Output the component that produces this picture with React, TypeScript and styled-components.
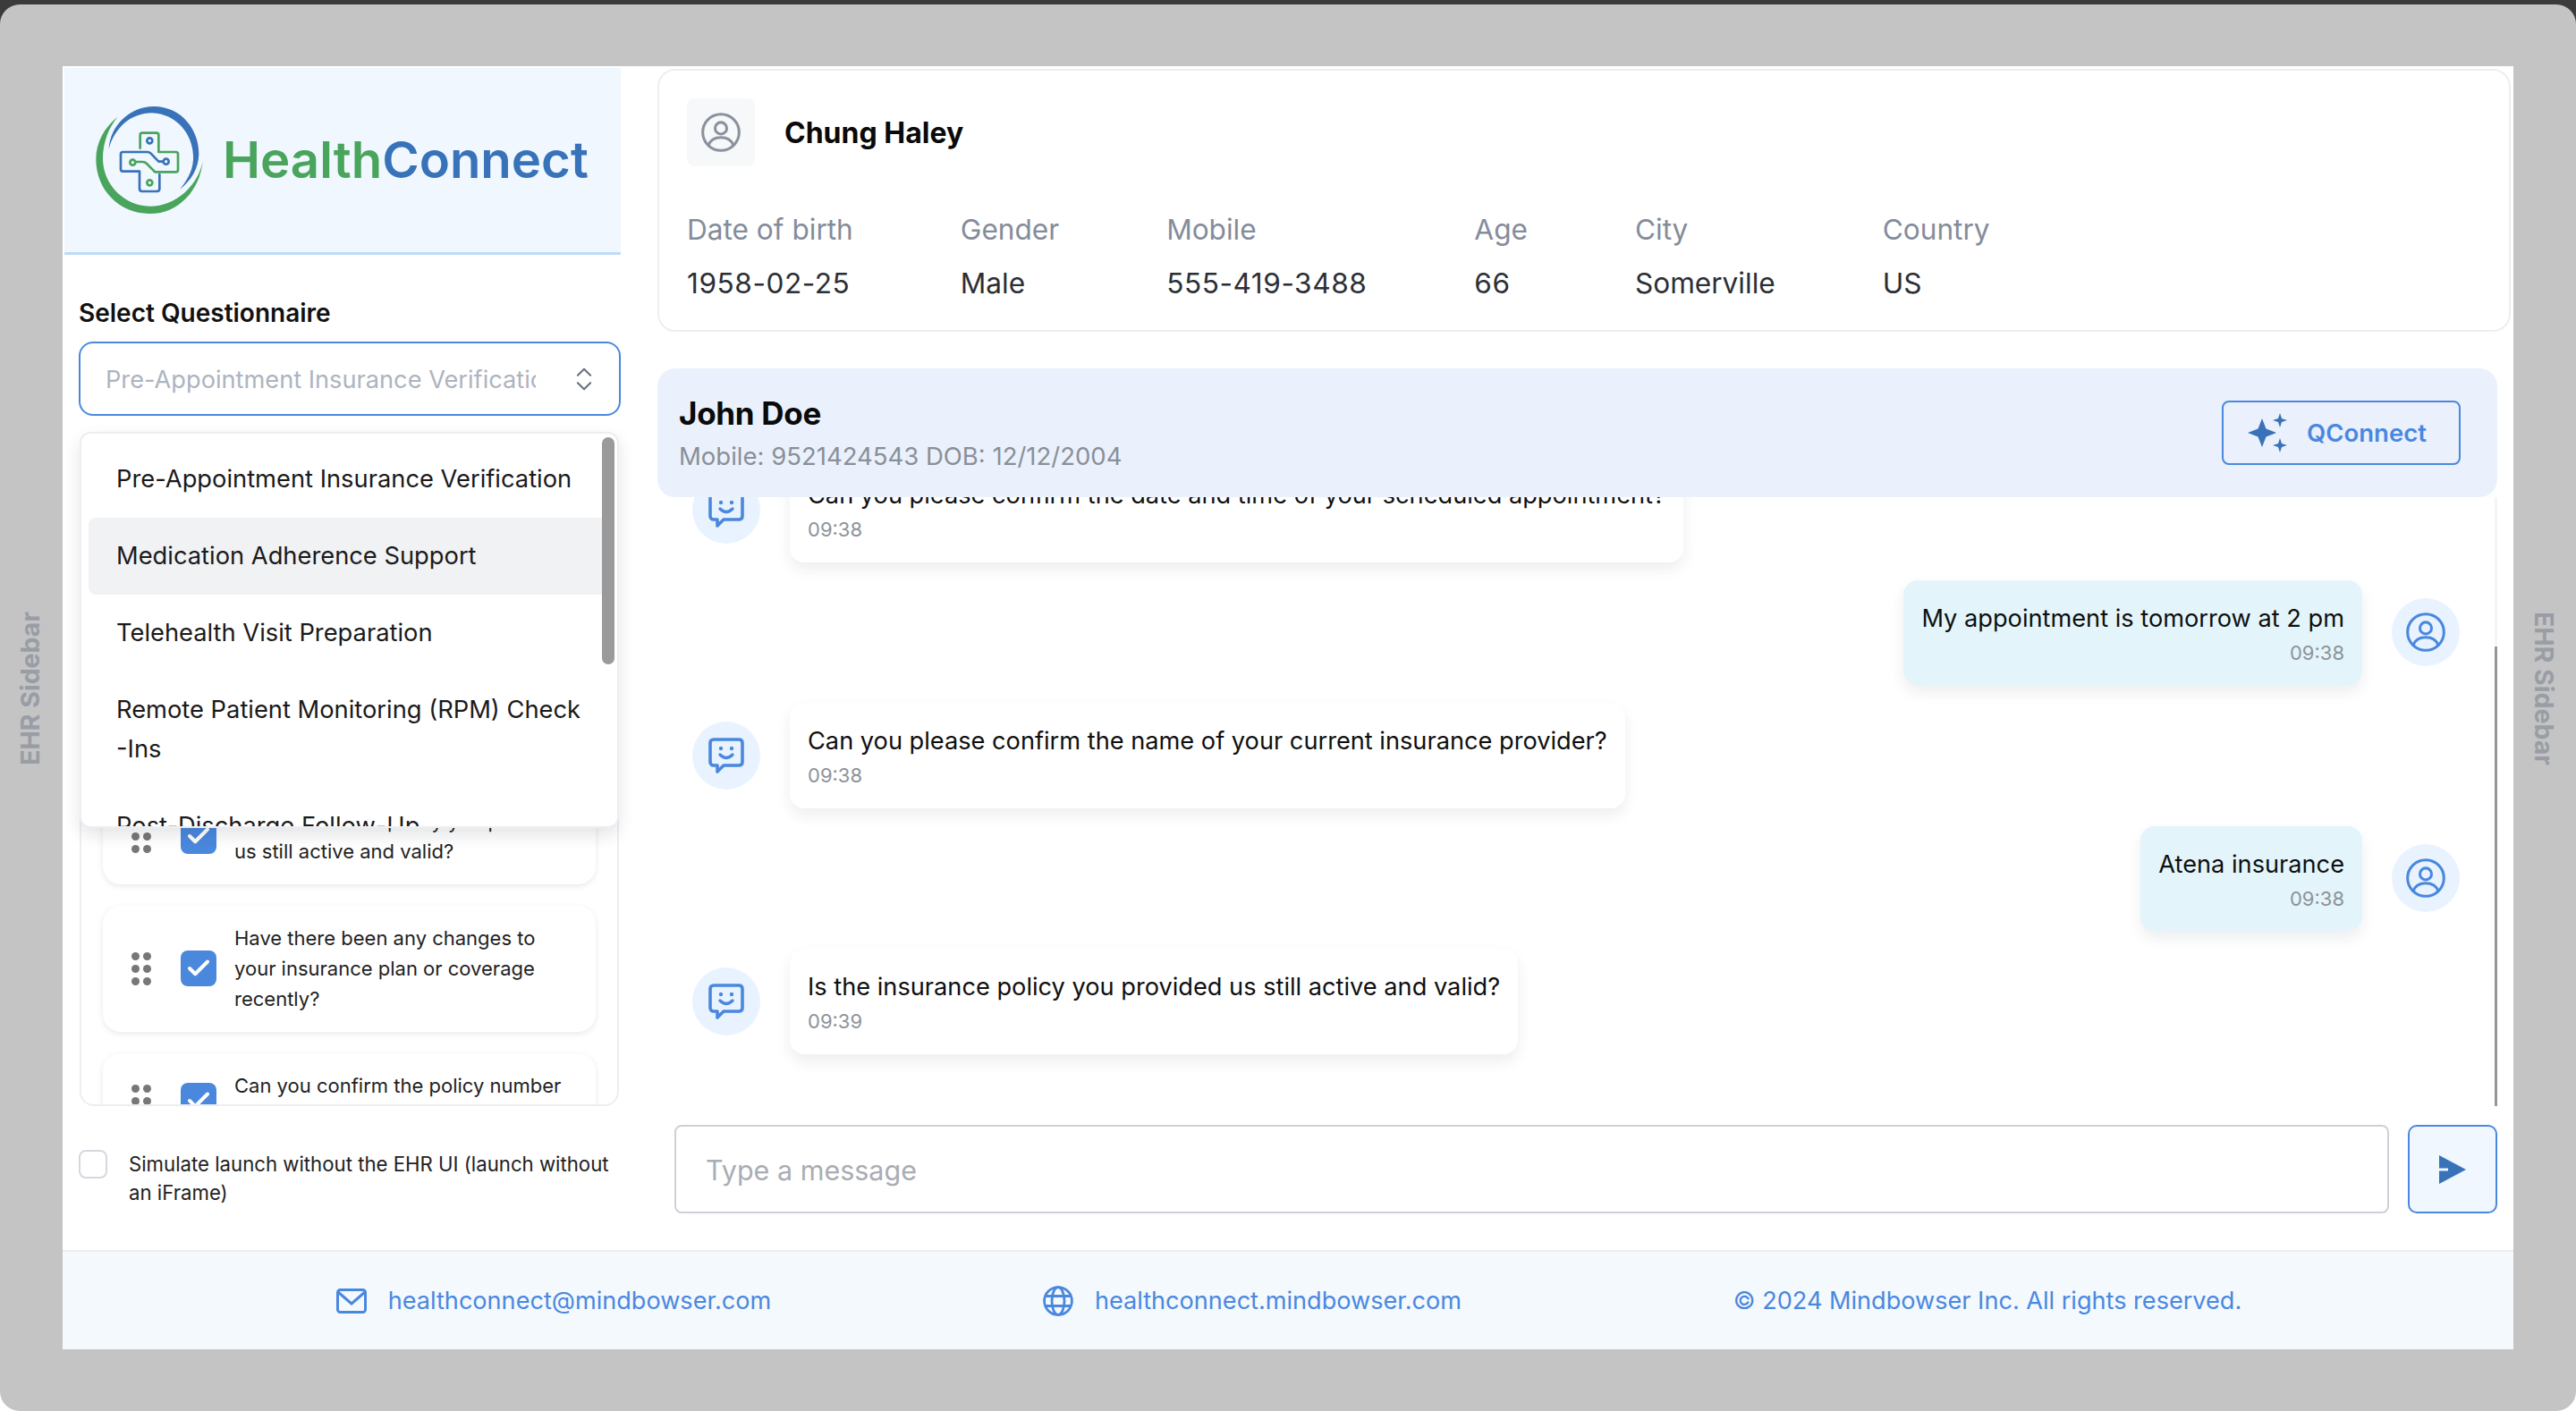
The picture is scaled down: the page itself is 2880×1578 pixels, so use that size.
import styled, { createGlobalStyle } from "styled-components";
import { Check, ChevronsUpDown } from "lucide-react";

const GlobalStyle = createGlobalStyle`
  html, body {
    margin: 0;
    padding: 0;
  }

  body {
    width: 2880px;
    height: 1578px;
    overflow: hidden;
    font-family: Inter, "Liberation Sans", sans-serif;
    background: linear-gradient(#3b3b3b 0 40px, #ffffff 40px);
    color: #111;
  }

  * {
    box-sizing: border-box;
  }
`;

const dropdownItems = [
  "Pre-Appointment Insurance Verification",
  "Medication Adherence Support",
  "Telehealth Visit Preparation",
  "Remote Patient Monitoring (RPM) Check -Ins",
  "Post-Discharge Follow-Up",
];

const questions = [
  "Is the insurance policy you provided us still active and valid?",
  "Have there been any changes to your insurance plan or coverage recently?",
  "Can you confirm the policy number listed on your insurance card?",
];

const patientFields = [
  ["Date of birth", "1958-02-25"],
  ["Gender", "Male"],
  ["Mobile", "555-419-3488"],
  ["Age", "66"],
  ["City", "Somerville"],
  ["Country", "US"],
];

const messages = [
  { from: "bot", text: "Can you please confirm the date and time of your scheduled appointment?", time: "09:38" },
  { from: "user", text: "My appointment is tomorrow at 2 pm", time: "09:38" },
  { from: "bot", text: "Can you please confirm the name of your current insurance provider?", time: "09:38" },
  { from: "user", text: "Atena insurance", time: "09:38" },
  { from: "bot", text: "Is the insurance policy you provided us still active and valid?", time: "09:39" },
];

function LogoMark() {
  return (
    <svg width="180" height="160" viewBox="0 0 540 480" fill="none">
      <path
        d="M95 203C100 120 170 60 245 60C340 60 398 140 397 220C396 270 370 310 333 338C365 300 380 265 378 225C375 150 320 85 240 82C170 82 115 130 95 203Z"
        fill="#3872b9"
      />
      <path
        d="M125 95C80 130 52 180 52 238C52 340 130 420 232 420C330 420 400 340 410 245C395 320 325 395 232 395C150 395 75 325 75 235C75 180 95 130 125 95Z"
        fill="#49a45c"
      />
      <g strokeWidth="8" strokeLinejoin="round" strokeLinecap="round">
        <path
          d="M200 200V156Q200 149 207 149H255Q262 149 262 156V213H320Q327 213 327 220V273Q327 280 320 280H250L222 252Q216 246 208 246H184"
          stroke="#49a45c"
        />
        <path
          d="M278 245H262L236 218Q231 213 224 213H142Q135 213 135 220V271Q135 278 142 278H198V336Q198 345 207 345H256Q265 345 265 336V288"
          stroke="#3872b9"
        />
        <circle cx="232" cy="175" r="9" stroke="#3872b9" />
        <circle cx="175" cy="248" r="9" stroke="#49a45c" />
        <circle cx="287" cy="245" r="9" stroke="#3872b9" />
        <circle cx="232" cy="316" r="9" stroke="#49a45c" />
      </g>
    </svg>
  );
}

function DragDots() {
  return (
    <DragGrid>
      {Array.from({ length: 6 }).map((_, i) => (
        <Dot key={i} />
      ))}
    </DragGrid>
  );
}

function PersonIcon({ size, color }: { size: number; color: string }) {
  return (
    <svg width={size} height={size} viewBox="0 0 24 24" fill="none" stroke={color} strokeWidth="1.6">
      <circle cx="12" cy="12" r="10.6" />
      <circle cx="12" cy="9.6" r="3.4" />
      <path d="M4.8 19.6C5.8 16.4 8.6 15 12 15C15.4 15 18.2 16.4 19.2 19.6" />
    </svg>
  );
}

function BotIcon() {
  return (
    <svg width="40" height="40" viewBox="0 0 40 40" fill="none">
      <path
        d="M6 2H34Q38 2 38 6V27Q38 31 34 31H17L10 38V31H6Q2 31 2 27V6Q2 2 6 2Z"
        stroke="#4a88de"
        strokeWidth="3.6"
        strokeLinejoin="round"
      />
      <circle cx="14" cy="12" r="2.2" fill="#4a88de" />
      <circle cx="26" cy="12" r="2.2" fill="#4a88de" />
      <path d="M13 19Q20 26 27 19" stroke="#4a88de" strokeWidth="3.4" strokeLinecap="round" />
    </svg>
  );
}

function SparkleIcon() {
  return (
    <svg width="44" height="44" viewBox="0 0 44 44" fill="#3872b9">
      <path d="M16 6L20.5 17.5L32 22L20.5 26.5L16 38L11.5 26.5L0 22L11.5 17.5Z" />
      <path d="M36 0L38 6L44 8L38 10L36 16L34 10L28 8L34 6Z" />
      <path d="M36 28L38 34L44 36L38 38L36 44L34 38L28 36L34 34Z" />
    </svg>
  );
}

function SendIcon() {
  return (
    <svg width="30" height="32" viewBox="0 0 30 32" fill="#3872b9">
      <path d="M0 0L30 16L0 32V17.4H10V14.6H0Z" />
    </svg>
  );
}

function MailIcon() {
  return (
    <svg width="34" height="28" viewBox="0 0 34 28" fill="none" stroke="#4a88de" strokeWidth="3">
      <rect x="1.5" y="1.5" width="31" height="25" rx="3" />
      <path d="M2 4L17 17L32 4" />
    </svg>
  );
}

function GlobeIcon() {
  return (
    <svg width="34" height="34" viewBox="0 0 34 34" fill="none" stroke="#4a88de" strokeWidth="2.8">
      <circle cx="17" cy="17" r="15.4" />
      <ellipse cx="17" cy="17" rx="7" ry="15.4" />
      <path d="M3 11.5H31M3 22.5H31" />
    </svg>
  );
}

export default function App() {
  return (
    <>
      <GlobalStyle />
      <Frame>
        <SideRail>
          <LeftRailText>EHR Sidebar</LeftRailText>
        </SideRail>

        <Panel>
          <PanelMain>
            <Sidebar>
              <LogoBar>
                <LogoMark />
                <Wordmark>
                  Health<WordmarkBlue>Connect</WordmarkBlue>
                </Wordmark>
              </LogoBar>

              <SidebarBody>
                <SelectLabel>Select Questionnaire</SelectLabel>
                <SelectBox>
                  <SelectValue>Pre-Appointment Insurance Verification</SelectValue>
                  <ChevronsUpDown size={34} color="#6b7280" strokeWidth={1.5} />
                </SelectBox>

                <ListArea>
                  <QuestionList>
                    {questions.map((q) => (
                      <QuestionCard key={q}>
                        <DragDots />
                        <CheckBox>
                          <Check size={30} color="#fff" strokeWidth={3.2} />
                        </CheckBox>
                        <QuestionText>{q}</QuestionText>
                      </QuestionCard>
                    ))}
                  </QuestionList>

                  <Dropdown>
                    <DropdownThumb />
                    {dropdownItems.map((item, i) => (
                      <DropdownItem key={item} $active={i === 1}>
                        {item}
                      </DropdownItem>
                    ))}
                  </Dropdown>
                </ListArea>

                <SimulateRow>
                  <EmptyCheck />
                  <SimulateText>Simulate launch without the EHR UI (launch without an iFrame)</SimulateText>
                </SimulateRow>
              </SidebarBody>
            </Sidebar>

            <Content>
              <PatientCard>
                <PatientHead>
                  <AvatarBox>
                    <PersonIcon size={46} color="#8b929d" />
                  </AvatarBox>
                  <PatientName>Chung Haley</PatientName>
                </PatientHead>
                <FieldRow>
                  {patientFields.map(([label, value]) => (
                    <Field key={label}>
                      <FieldLabel>{label}</FieldLabel>
                      <FieldValue $digits={/^\d/.test(value)}>{value}</FieldValue>
                    </Field>
                  ))}
                </FieldRow>
              </PatientCard>

              <ChatHeader>
                <div>
                  <ChatName>John Doe</ChatName>
                  <ChatMeta>Mobile: 9521424543 DOB: 12/12/2004</ChatMeta>
                </div>
                <QConnectButton>
                  <SparkleIcon />
                  QConnect
                </QConnectButton>
              </ChatHeader>

              <MessageViewport>
                <ScrollThumb />
                <MessageList>
                  {messages.map((m) =>
                    m.from === "bot" ? (
                      <BotRow key={m.text}>
                        <RoundAvatar>
                          <BotIcon />
                        </RoundAvatar>
                        <BotBubble>
                          <BubbleText>{m.text}</BubbleText>
                          <BubbleTime>{m.time}</BubbleTime>
                        </BotBubble>
                      </BotRow>
                    ) : (
                      <UserRow key={m.text}>
                        <UserBubble>
                          <BubbleText>{m.text}</BubbleText>
                          <BubbleTime>{m.time}</BubbleTime>
                        </UserBubble>
                        <RoundAvatar>
                          <PersonIcon size={46} color="#4a88de" />
                        </RoundAvatar>
                      </UserRow>
                    )
                  )}
                </MessageList>
              </MessageViewport>

              <InputRow>
                <MessageInput placeholder="Type a message" />
                <SendButton>
                  <SendIcon />
                </SendButton>
              </InputRow>
            </Content>
          </PanelMain>

          <Footer>
            <FooterItem>
              <MailIcon />
              healthconnect@mindbowser.com
            </FooterItem>
            <FooterItem>
              <GlobeIcon />
              healthconnect.mindbowser.com
            </FooterItem>
            <FooterItem>© 2024 Mindbowser Inc. All rights reserved.</FooterItem>
          </Footer>
        </Panel>

        <SideRail>
          <RightRailText>EHR Sidebar</RightRailText>
        </SideRail>
      </Frame>
    </>
  );
}

const Frame = styled.div`
  display: grid;
  grid-template-columns: 70px 2740px 70px;
  width: 2880px;
  height: 1573px;
  margin-top: 5px;
  padding: 69px 0 64px;

  background: #c4c4c4;
  border-radius: 22px;
`;

const SideRail = styled.div`
  display: flex;
  justify-content: center;
  align-items: center;
  padding-bottom: 48px;
`;

const LeftRailText = styled.span`
  writing-mode: vertical-rl;
  transform: rotate(180deg);
  margin-right: 4px;

  font-size: 28.5px;
  font-weight: 700;
  color: #999da5;
`;

const RightRailText = styled(LeftRailText)`
  transform: none;
  margin: 0 0 0 -2px;
`;

const Panel = styled.div`
  display: flex;
  flex-direction: column;
  height: 1435px;
  background: #fff;
`;

const PanelMain = styled.div`
  display: flex;
  height: 1324px;
`;

const Sidebar = styled.aside`
  display: flex;
  flex-direction: column;
  flex: 0 0 624px;
  padding: 2px 0 0 2px;
`;

const LogoBar = styled.div`
  display: flex;
  align-items: center;
  height: 209px;
  padding: 0 0 0 18px;

  background: #f0f7ff;
  border-bottom: 3px solid #bfdcf6;
`;

const Wordmark = styled.div`
  margin: 0 0 0 -21px;

  font-size: 56.3px;
  font-weight: 600;
  line-height: 1;
  color: #49a45c;
`;

const WordmarkBlue = styled.span`
  color: #3872b9;
`;

const SidebarBody = styled.div`
  display: flex;
  flex-direction: column;
  padding: 48px 0 0 16px;
`;

const SelectLabel = styled.div`
  font-size: 28px;
  font-weight: 600;
  line-height: 34px;
  color: #111;
`;

const SelectBox = styled.div`
  display: flex;
  align-items: center;
  justify-content: space-between;
  height: 83px;
  margin-top: 15px;
  padding: 0 22px 0 28px;

  background: #fff;
  border: 2.5px solid #4a88de;
  border-radius: 16px;
`;

const SelectValue = styled.div`
  width: 481px;
  padding-top: 2px;
  overflow: hidden;
  white-space: nowrap;

  font-size: 27.2px;
  color: #adb4bf;
`;

const ListArea = styled.div`
  position: relative;
  margin: 18px 2px 0 1px;
`;

const QuestionList = styled.div`
  display: flex;
  flex-direction: column;
  gap: 24px;
  height: 754px;
  padding: 397px 24px 0;
  overflow: hidden;

  border: 2px solid #eeeef2;
  border-radius: 16px;
`;

const QuestionCard = styled.div`
  display: flex;
  align-items: center;
  flex: 0 0 auto;
  padding: 19px 20px 20px 32px;

  background: #fff;
  border-radius: 20px;
  box-shadow: 0 2px 6px rgba(30, 40, 60, 0.1);
`;

const DragGrid = styled.div`
  display: grid;
  grid-template-columns: 9px 9px;
  gap: 5px 4px;
  flex: 0 0 auto;
  margin-right: 33px;
`;

const Dot = styled.span`
  width: 9px;
  height: 9px;
  border-radius: 50%;
  background: #777;
`;

const CheckBox = styled.div`
  display: flex;
  align-items: center;
  justify-content: center;
  flex: 0 0 40px;
  height: 40px;
  margin-right: 20px;

  background: #4a88de;
  border-radius: 8px;
`;

const QuestionText = styled.div`
  font-size: 22px;
  line-height: 34px;
  color: #222;
`;

const Dropdown = styled.div`
  position: absolute;
  top: 0;
  left: 0;
  right: 0;
  height: 443px;
  padding: 8px 8px;
  overflow: hidden;

  background: #fff;
  border: 2px solid #eeeef2;
  border-radius: 12px;
  box-shadow: 0 8px 18px rgba(30, 40, 60, 0.12);
`;

const DropdownThumb = styled.div`
  position: absolute;
  z-index: 1;
  top: 4px;
  right: 3px;
  width: 14px;
  height: 254px;

  background: #9a9a9a;
  border-radius: 7px;
`;

const DropdownItem = styled.div<{ $active: boolean }>`
  padding: 21px 20px 21px 31px;

  font-size: 27.3px;
  line-height: 44px;
  color: #1a1a1a;

  background: ${(p) => (p.$active ? "#f1f2f4" : "transparent")};
  border-radius: 8px;
`;

const SimulateRow = styled.div`
  display: flex;
  gap: 24px;
  margin-top: 49px;
`;

const EmptyCheck = styled.div`
  flex: 0 0 32px;
  height: 32px;

  background: #fff;
  border: 2.5px solid #d4d8de;
  border-radius: 8px;
`;

const SimulateText = styled.div`
  font-size: 22.2px;
  line-height: 32px;
  color: #222;
`;

const Content = styled.main`
  display: flex;
  flex-direction: column;
  flex: 1;
  padding: 3px 3px 0 41px;
`;

const PatientCard = styled.section`
  height: 294px;
  padding: 31px 31px 0;

  border: 2px solid #eeeeee;
  border-radius: 20px;
`;

const PatientHead = styled.div`
  display: flex;
  align-items: center;
  gap: 33px;
`;

const AvatarBox = styled.div`
  display: flex;
  align-items: center;
  justify-content: center;
  width: 76px;
  height: 76px;

  background: #f7f8fa;
  border-radius: 8px;
`;

const PatientName = styled.div`
  font-size: 32px;
  font-weight: 700;
  color: #0a0a0a;
`;

const FieldRow = styled.div`
  display: flex;
  gap: 120px;
  margin-top: 50px;
`;

const Field = styled.div`
  display: flex;
  flex-direction: column;
  gap: 18px;
`;

const FieldLabel = styled.div`
  font-size: 31.6px;
  line-height: 42px;
  color: #848c9b;
`;

const FieldValue = styled.div<{ $digits: boolean }>`
  font-size: 31.6px;
  line-height: 42px;
  letter-spacing: ${(p) => (p.$digits ? "0.55px" : "0")};
  color: #2b2f36;
`;

const ChatHeader = styled.header`
  position: relative;
  z-index: 1;
  display: flex;
  align-items: center;
  justify-content: space-between;
  height: 144px;
  margin: 41px 15px 0 0;
  padding: 0 41px 0 24px;

  background: #eaf1fc;
  border-radius: 20px;
`;

const ChatName = styled.div`
  font-size: 35px;
  font-weight: 700;
  letter-spacing: -0.3px;
  line-height: 44px;
  color: #0a0a0a;
`;

const ChatMeta = styled.div`
  margin-top: 7px;

  font-size: 27.5px;
  line-height: 38px;
  color: #8a8f98;
`;

const QConnectButton = styled.button`
  display: flex;
  align-items: center;
  gap: 22px;
  width: 267px;
  height: 72px;
  padding: 0 0 0 27px;

  font-family: inherit;
  font-size: 27.5px;
  font-weight: 600;
  color: #4a88de;

  background: transparent;
  border: 2.5px solid #4a88de;
  border-radius: 8px;
`;

const MessageViewport = styled.div`
  position: relative;
  height: 681px;
  margin-right: 15px;
  overflow: hidden;

  background: linear-gradient(#f5f5f5, #f5f5f5) right top / 3px 100% no-repeat;
`;

const ScrollThumb = styled.div`
  position: absolute;
  top: 167px;
  right: 0;
  bottom: 0;
  width: 3px;
  background: #979797;
`;

const MessageList = styled.div`
  display: flex;
  flex-direction: column;
  gap: 20px;
  margin-top: -45px;
`;

const BotRow = styled.div`
  display: flex;
  align-items: center;
  gap: 33px;
  padding-left: 39px;
`;

const UserRow = styled.div`
  display: flex;
  align-items: center;
  justify-content: flex-end;
  gap: 33px;
  padding-right: 42px;
`;

const RoundAvatar = styled.div`
  display: flex;
  align-items: center;
  justify-content: center;
  width: 76px;
  height: 76px;

  background: #e9f3ff;
  border-radius: 50%;
`;

const BotBubble = styled.div`
  height: 117.5px;
  padding: 23px 20px 0 20px;

  background: #fff;
  border-radius: 16px;
  box-shadow: 0 8px 16px rgba(30, 40, 60, 0.08);
`;

const UserBubble = styled(BotBubble)`
  text-align: right;
  background: #e3f5fb;
`;

const BubbleText = styled.div`
  font-size: 27.2px;
  line-height: 40px;
  color: #0f0f0f;
`;

const BubbleTime = styled.div`
  margin-top: 6px;

  font-size: 22px;
  line-height: 24px;
  color: #8e9299;
`;

const InputRow = styled.div`
  display: flex;
  gap: 21px;
  height: 99px;
  margin: 21px 15px 0 19px;
`;

const MessageInput = styled.input`
  flex: 1;
  padding: 2px 33px 0;

  font-family: inherit;
  font-size: 30.5px;
  color: #111;

  background: #fff;
  border: 2.5px solid #cdd1d7;
  border-radius: 8px;
  outline: none;

  &::placeholder {
    color: #a9adb4;
  }
`;

const SendButton = styled.button`
  display: flex;
  align-items: center;
  justify-content: center;
  flex: 0 0 100px;

  background: #f0f7ff;
  border: 2.5px solid #4a88de;
  border-radius: 10px;
`;

const Footer = styled.footer`
  display: flex;
  align-items: center;
  justify-content: space-evenly;
  flex: 1;
  padding-left: 2px;

  background: #f4f9fe;
  border-top: 2px solid #ecedf0;
`;

const FooterItem = styled.div`
  display: flex;
  align-items: center;
  gap: 24px;

  font-size: 27.1px;
  color: #4a88de;
`;
